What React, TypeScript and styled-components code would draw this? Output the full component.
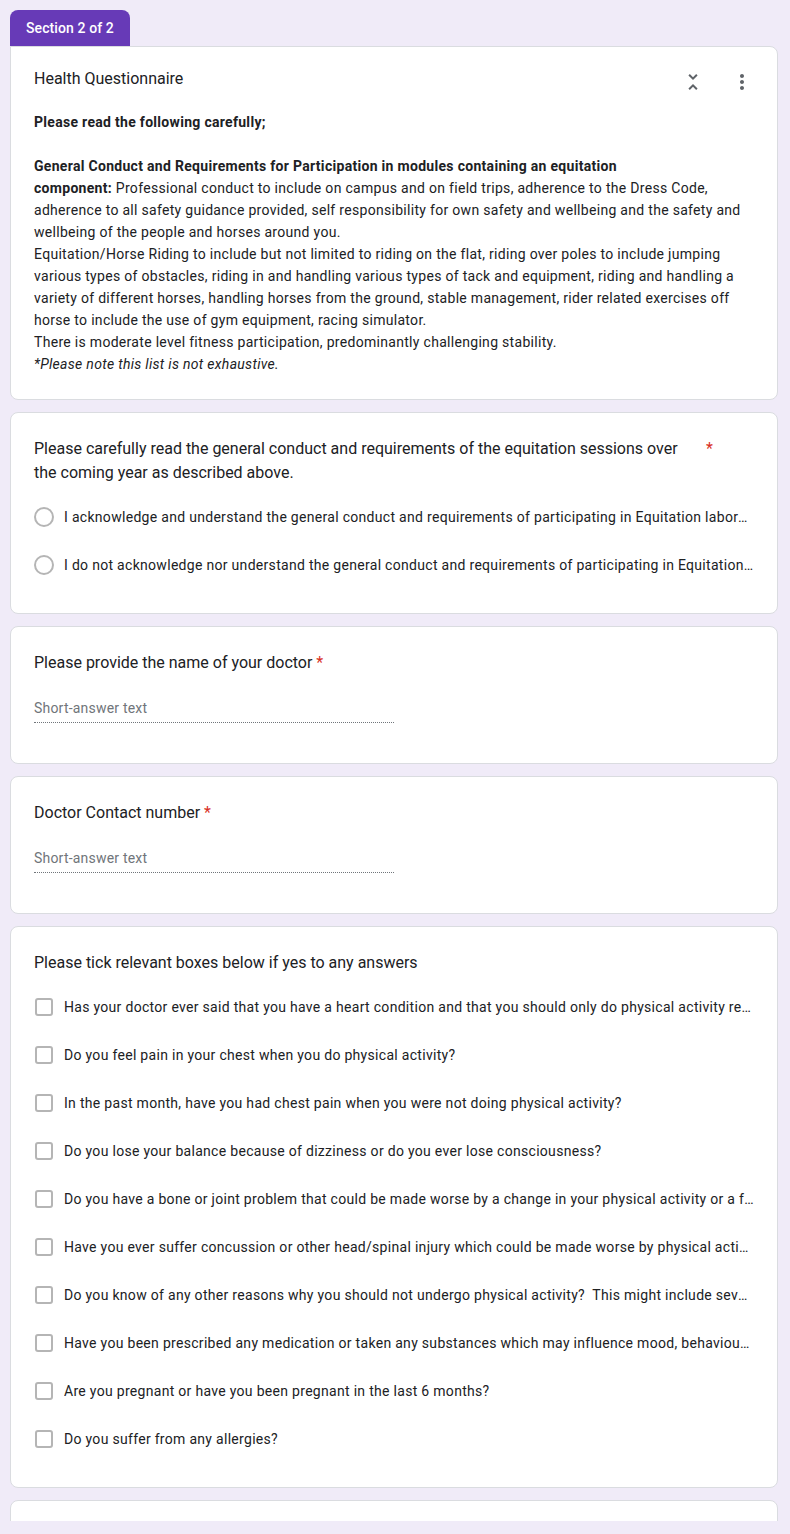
import React from "react";
import styled, { createGlobalStyle } from "styled-components";

const Global = createGlobalStyle`
  html, body { margin: 0; padding: 0; background: #f0ebf8; }
  body {
    font-family: Roboto, "Noto Sans", Arial, sans-serif;
    color: #202124;
    -webkit-font-smoothing: antialiased;
  }
  * { box-sizing: border-box; }
`;

const Page = styled.div`
  height: 1521px;
  overflow: hidden;
  padding: 10px 12px 0 10px;
  display: flex;
  flex-direction: column;
`;

const Tab = styled.div`
  align-self: flex-start;
  height: 36px;
  padding: 0 16px;
  background: #673ab7;
  color: #fff;
  border-radius: 8px 8px 0 0;
  font-size: 14px;
  font-weight: 500;
  line-height: 36px;
  letter-spacing: 0.1px;
`;

const Stack = styled.div`
  display: flex;
  flex-direction: column;
  gap: 12px;
`;

const Card = styled.div<{ $attached?: boolean; $cut?: boolean }>`
  flex-shrink: 0;
  background: #fff;
  border: 1px solid #dadce0;
  border-radius: ${(p) => (p.$attached ? "0 8px 8px 8px" : "8px")};
  padding: ${(p) => (p.$attached ? "20px 23px 24px" : "24px 23px 24px")};
  min-height: ${(p) => (p.$cut ? "120px" : "0")};
`;

const SectionHeader = styled.div`
  display: flex;
  align-items: flex-start;
`;

const SectionTitle = styled.div`
  flex: 1;
  font-size: 16px;
  line-height: 24px;
`;

const IconGroup = styled.div`
  display: flex;
  gap: 25px;
  margin-top: 3px;
  color: #5f6368;
`;

const IconBox = styled.span`
  width: 24px;
  height: 24px;
  display: inline-flex;
  align-items: center;
  justify-content: center;
`;

const Description = styled.div`
  margin-top: 17px;
  font-size: 14px;
  line-height: 22px;
  letter-spacing: 0.3px;
`;

const Strong = styled.b`
  font-weight: 700;
`;

const Em = styled.i`
  font-style: italic;
`;

const QuestionTitle = styled.div`
  display: flex;
  align-items: flex-start;
  font-size: 16px;
  line-height: 24px;
`;

const QuestionText = styled.div<{ $wide?: boolean }>`
  width: ${(p) => (p.$wide ? "auto" : "660px")};
`;

const Asterisk = styled.span<{ $detached?: boolean }>`
  color: #d93025;
  margin-left: ${(p) => (p.$detached ? "12px" : "0")};
`;

const OptionList = styled.div`
  margin-top: 8px;
  display: flex;
  flex-direction: column;
`;

const Option = styled.div`
  height: 48px;
  display: flex;
  align-items: center;
  min-width: 0;
`;

const Radio = styled.span`
  flex-shrink: 0;
  width: 20px;
  height: 20px;
  border: 2px solid #b5b5b5;
  border-radius: 50%;
  margin-right: 10px;
`;

const Checkbox = styled.span`
  flex-shrink: 0;
  width: 18px;
  height: 18px;
  border: 2px solid #b5b5b5;
  border-radius: 3px;
  margin-left: 1px;
  margin-right: 11px;
`;

const OptionLabel = styled.span`
  flex: 1;
  min-width: 0;
  font-size: 14px;
  line-height: 20px;
  letter-spacing: 0.3px;
  white-space: nowrap;
  overflow: hidden;
  text-overflow: ellipsis;
`;

const ShortAnswer = styled.div`
  width: 360px;
  margin: 23px 0 16px;
  padding-bottom: 4px;
  border-bottom: 1px dotted #70757a;
  color: #70757a;
  font-size: 14px;
  line-height: 20px;
  letter-spacing: 0.2px;
`;

const UnfoldLessIcon = () => (
  <svg width="24" height="24" viewBox="0 0 24 24" fill="currentColor">
    <path d="M7.41 18.59L8.83 20 12 16.83 15.17 20l1.41-1.41L12 14l-4.59 4.59zm9.18-13.18L15.17 4 12 7.17 8.83 4 7.41 5.41 12 10l4.59-4.59z" />
  </svg>
);

const MoreVertIcon = () => (
  <svg width="24" height="24" viewBox="0 0 24 24" fill="currentColor">
    <path d="M12 8c1.1 0 2-.9 2-2s-.9-2-2-2-2 .9-2 2 .9 2 2 2zm0 2c-1.1 0-2 .9-2 2s.9 2 2 2 2-.9 2-2-.9-2-2-2zm0 6c-1.1 0-2 .9-2 2s.9 2 2 2 2-.9 2-2-.9-2-2-2z" />
  </svg>
);

const radioOptions = [
  "I acknowledge and understand the general conduct and requirements of participating in Equitation laboratory sessions and field trips.",
  "I do not acknowledge nor understand the general conduct and requirements of participating in Equitation laboratory sessions and field trips.",
];

const tickOptions = [
  "Has your doctor ever said that you have a heart condition and that you should only do physical activity recommended by a doctor?",
  "Do you feel pain in your chest when you do physical activity?",
  "In the past month, have you had chest pain when you were not doing physical activity?",
  "Do you lose your balance because of dizziness or do you ever lose consciousness?",
  "Do you have a bone or joint problem that could be made worse by a change in your physical activity or a fall?",
  "Have you ever suffer concussion or other head/spinal injury which could be made worse by physical activity?",
  "Do you know of any other reasons why you should not undergo physical activity?\u00a0 This might include severe asthma or epilepsy.",
  "Have you been prescribed any medication or taken any substances which may influence mood, behaviour or performance?",
  "Are you pregnant or have you been pregnant in the last 6 months?",
  "Do you suffer from any allergies?",
];

export default function App() {
  return (
    <>
      <Global />
      <Page>
        <Tab>Section 2 of 2</Tab>
        <Stack>
          <Card $attached>
            <SectionHeader>
              <SectionTitle>Health Questionnaire</SectionTitle>
              <IconGroup>
                <IconBox>
                  <UnfoldLessIcon />
                </IconBox>
                <IconBox>
                  <MoreVertIcon />
                </IconBox>
              </IconGroup>
            </SectionHeader>
            <Description>
              <Strong>Please read the following carefully;</Strong>
              <br />
              <br />
              <Strong>
                General Conduct and Requirements for Participation in modules containing an equitation
                <br />
                component:
              </Strong>{" "}
              Professional conduct to include on campus and on field trips, adherence to the Dress Code,
              adherence to all safety guidance provided, self responsibility for own safety and wellbeing and
              the safety and wellbeing of the people and horses around you.
              <br />
              Equitation/Horse Riding to include but not limited to riding on the flat, riding over poles to
              include jumping various types of obstacles, riding in and handling various types of tack and
              equipment, riding and handling a variety of different horses, handling horses from the ground,
              stable management, rider related exercises off horse to include the use of gym equipment, racing
              simulator.
              <br />
              There is moderate level fitness participation, predominantly challenging stability.
              <br />
              <Em>*Please note this list is not exhaustive.</Em>
            </Description>
          </Card>

          <Card>
            <QuestionTitle>
              <QuestionText>
                Please carefully read the general conduct and requirements of the equitation sessions over the
                coming year as described above.
              </QuestionText>
              <Asterisk $detached>*</Asterisk>
            </QuestionTitle>
            <OptionList>
              {radioOptions.map((o) => (
                <Option key={o}>
                  <Radio />
                  <OptionLabel>{o}</OptionLabel>
                </Option>
              ))}
            </OptionList>
          </Card>

          <Card>
            <QuestionTitle>
              <QuestionText $wide>
                Please provide the name of your doctor <Asterisk>*</Asterisk>
              </QuestionText>
            </QuestionTitle>
            <ShortAnswer>Short-answer text</ShortAnswer>
          </Card>

          <Card>
            <QuestionTitle>
              <QuestionText $wide>
                Doctor Contact number <Asterisk>*</Asterisk>
              </QuestionText>
            </QuestionTitle>
            <ShortAnswer>Short-answer text</ShortAnswer>
          </Card>

          <Card>
            <QuestionTitle>
              <QuestionText $wide>Please tick relevant boxes below if yes to any answers</QuestionText>
            </QuestionTitle>
            <OptionList>
              {tickOptions.map((o) => (
                <Option key={o}>
                  <Checkbox />
                  <OptionLabel>{o}</OptionLabel>
                </Option>
              ))}
            </OptionList>
          </Card>

          <Card $cut />
        </Stack>
      </Page>
    </>
  );
}
